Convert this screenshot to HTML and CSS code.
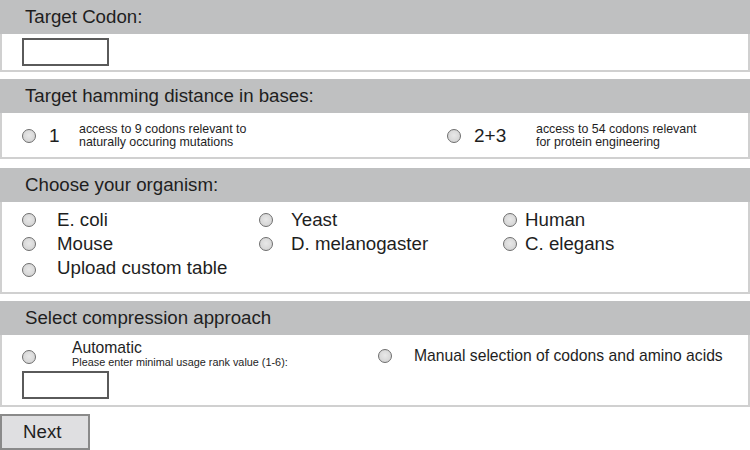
FILE: index.html
```html
<!DOCTYPE html>
<html>
<head>
<meta charset="utf-8">
<link rel="stylesheet" href="styles.css">
</head>
<body>
<div class="page">
  <section class="panel">
    <div class="head">Target Codon:</div>
    <div class="body b1"><div class="box"></div></div>
  </section>
  <section class="panel p2">
    <div class="head">Target hamming distance in bases:</div>
    <div class="body b2">
      <div class="opt o1"><span class="radio"></span><span class="big">1</span><span class="small">access to 9 codons relevant to<br>naturally occuring mutations</span></div>
      <div class="opt o2"><span class="radio"></span><span class="big">2+3</span><span class="small">access to 54 codons relevant<br>for protein engineering</span></div>
    </div>
  </section>
  <section class="panel p3">
    <div class="head">Choose your organism:</div>
    <div class="body b3">
      <div class="grid">
        <div class="org c1"><span class="radio"></span>E. coli</div>
        <div class="org c2"><span class="radio"></span>Yeast</div>
        <div class="org c3"><span class="radio"></span>Human</div>
        <div class="org c1"><span class="radio"></span>Mouse</div>
        <div class="org c2"><span class="radio"></span>D. melanogaster</div>
        <div class="org c3"><span class="radio"></span>C. elegans</div>
        <div class="org c1"><span class="radio"></span>Upload custom table</div>
      </div>
    </div>
  </section>
  <section class="panel p4">
    <div class="head">Select compression approach</div>
    <div class="body b4">
      <div class="auto">
        <div class="autorow"><span class="radio"></span><span class="autotext"><span class="autolabel">Automatic</span><span class="hint">Please enter minimal usage rank value (1-6):</span></span></div>
        <div class="box"></div>
      </div>
      <div class="manual"><span class="radio"></span>Manual selection of codons and amino acids</div>
    </div>
  </section>
  <div class="next">Next</div>
</div>
</body>
</html>
```
FILE: styles.css
```css
html, body { margin: 0; padding: 0; background: #fff; }
body { font-family: "Liberation Sans", Arial, sans-serif; color: #1e1e1e; }
.page { width: 750px; }
.panel { margin-bottom: 7px; }
.p2 { margin-bottom: 9px; }
.head {
  background: #bfc0c1;
  height: 34px;
  line-height: 34px;
  font-size: 18.7px;
  padding-left: 25px;
}
.body {
  border: 2px solid #d0d0d0;
  border-top: none;
  background: #fff;
}
.b1 { padding: 4px 0 0 22px; box-sizing: border-box; height: 38px; }
.box {
  width: 83px; height: 24px;
  border: 2px solid #5a5a5a;
  background: #fff;
}
.b1 .box { margin-left: -2px; }
.radio {
  display: inline-block;
  width: 12px; height: 12px;
  border: 1px solid #6e6e6e;
  border-radius: 50%;
  background: radial-gradient(circle at 50% 45%, #e8e8e8 0%, #d6d6d6 70%, #c6c6c6 100%);
  flex: none;
}
.b2 { height: 46px; box-sizing: border-box; display: flex; align-items: center; padding-top: 2px; }
.opt { display: flex; align-items: center; }
.o1 { padding-left: 20px; width: 425px; }
.o1 .big { margin-left: 13px; width: 30px; }
.o2 .big { margin-left: 13px; width: 62px; }
.big { font-size: 19px; }
.small { font-size: 12.4px; line-height: 13px; }
.b3 { height: 92px; box-sizing: border-box; padding: 6px 0 0 20px; }
.grid { display: grid; grid-template-columns: 237px 244px 200px; row-gap: 0; }
.org { display: flex; align-items: center; font-size: 18.7px; height: 24px; }
.org .radio { margin-right: 21px; }
.c2 .radio { margin-right: 18px; }
.c3 .radio { margin-right: 8px; }
.b3 .org:nth-child(7) .radio { margin-top: 4px; }
.b4 { height: 72px; box-sizing: border-box; display: flex; padding: 5px 0 0 20px; }
.auto { width: 356px; }
.autorow { display: flex; align-items: flex-start; }
.autorow .radio { margin-top: 10px; margin-right: 36px; }
.autotext { display: flex; flex-direction: column; }
.autolabel { font-size: 15.7px; line-height: 16px; }
.hint { font-size: 10.85px; line-height: 12px; }
.auto .box { margin-top: 3px; }
.manual { display: flex; align-items: center; font-size: 15.7px; height: 28px; margin-top: 2px; }
.manual .radio { margin-right: 22px; }
.next {
  width: 86px; height: 32px;
  border: 2px solid #8a8a8a;
  background: #dfdfe1;
  font-size: 18.7px;
  line-height: 32px;
  text-indent: 21px;
}
```
